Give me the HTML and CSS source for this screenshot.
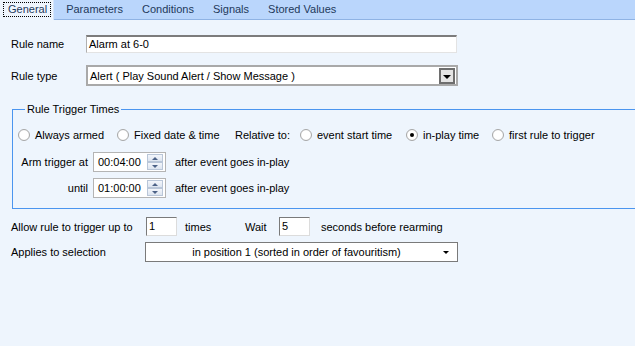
FILE: index.html
```html
<!DOCTYPE html>
<html lang="en">
<head>
  <meta charset="UTF-8">
  <title>Rule Editor</title>
  <link rel="stylesheet" href="styles.css">
</head>
<body>
  <div class="tabs">
    <div class="tab active"><span class="focus">General</span></div>
    <div class="tab">Parameters</div>
    <div class="tab">Conditions</div>
    <div class="tab">Signals</div>
    <div class="tab">Stored Values</div>
  </div>

  <div class="page">
    <div class="row row-name">
      <label class="lbl">Rule name</label>
      <div class="textbox name-box">Alarm at 6-0</div>
    </div>

    <div class="row row-type">
      <label class="lbl">Rule type</label>
      <div class="combo type-combo">
        <span>Alert ( Play Sound Alert / Show Message )</span>
        <span class="drop-btn"><span class="tri"></span></span>
      </div>
    </div>

    <fieldset class="group">
      <legend>Rule Trigger Times</legend>
      <div class="radios">
        <div class="opt w1"><span class="radio"></span>Always armed</div>
        <div class="opt w2"><span class="radio"></span>Fixed date &amp; time</div>
        <div class="opt w3">Relative to:</div>
        <div class="opt w4"><span class="radio"></span>event start time</div>
        <div class="opt w5"><span class="radio checked"></span>in-play time</div>
        <div class="opt"><span class="radio"></span>first rule to trigger</div>
      </div>

      <div class="time-row">
        <span class="time-lbl">Arm trigger at</span>
        <div class="spin">
          <span class="spin-val">00:04:00</span>
          <span class="spin-btns"><span class="up"></span><span class="down"></span></span>
        </div>
        <span class="after">after event goes in-play</span>
      </div>
      <div class="time-row until">
        <span class="time-lbl">until</span>
        <div class="spin">
          <span class="spin-val">01:00:00</span>
          <span class="spin-btns"><span class="up"></span><span class="down"></span></span>
        </div>
        <span class="after">after event goes in-play</span>
      </div>
    </fieldset>

    <div class="row row-allow">
      <span class="lbl wide">Allow rule to trigger up to</span>
      <div class="small-box">1</div>
      <span class="times">times</span>
      <span class="wait">Wait</span>
      <div class="small-box">5</div>
      <span class="secs">seconds before rearming</span>
    </div>

    <div class="row row-applies">
      <span class="lbl wide2">Applies to selection</span>
      <div class="combo flat-combo">
        <span class="center-txt">in position 1 (sorted in order of favouritism)</span>
        <span class="small-tri"></span>
      </div>
    </div>
  </div>
</body>
</html>
```

FILE: styles.css
```css
body {
  margin: 0;
  width: 635px;
  height: 346px;
  overflow: hidden;
  background-color: #eef5fd;
  font-family: "Liberation Sans", Arial, sans-serif;
  font-size: 11px;
  color: #000;
}

/* tab strip */
.tabs {
  display: flex;
  height: 19px;
  background-color: #bad6fc;
  border-bottom: 1px solid #8fb3e4;
}

.tab {
  padding: 0 9px 0 10px;
  line-height: 19px;
  color: #1e395b;
}

.tab.active {
  background-color: #eef5fd;
  padding: 0 2px 0 3px;
  margin-bottom: -1px;
  height: 20px;
  margin-right: 2px;
  border-right: 1px solid #d4e4fa;
}

.tab .focus {
  display: inline-block;
  margin-top: 2px;
  padding: 0 3px 0 4px;
  line-height: 13px;
  border: 1px dotted #000;
}

/* form */
.page {
  padding: 15px 0 0 11px;
}

.row {
  display: flex;
  align-items: center;
}

.lbl {
  width: 75px;
}

.row-name {
  height: 18px;
}

.textbox {
  box-sizing: border-box;
  height: 18px;
  background: #fff;
  border-top: 2px solid #7c7c7c;
  border-left: 1px solid #b0b0b0;
  border-right: 1px solid #e3e3e3;
  border-bottom: 1px solid #e3e3e3;
  padding-left: 2px;
  line-height: 14px;
}

.name-box {
  width: 371px;
}

.row-type {
  margin-top: 12px;
  height: 21px;
}

.combo {
  box-sizing: border-box;
  display: flex;
  align-items: center;
  background: #fff;
}

.type-combo {
  width: 372px;
  height: 21px;
  border: 2px solid #a9a9a9;
  padding-left: 2px;
  justify-content: space-between;
}

.drop-btn {
  box-sizing: border-box;
  width: 16px;
  height: 16px;
  margin-right: 1px;
  border: 2px solid #6e6e6e;
  background: #e4e4e4;
  display: flex;
  align-items: center;
  justify-content: center;
}

.tri {
  width: 0;
  height: 0;
  border-left: 4px solid transparent;
  border-right: 4px solid transparent;
  border-top: 4px solid #000;
  margin-top: 2px;
}

/* group box */
.group {
  margin: 17px -20px 0 1px;
  padding: 12px 0 10px 5px;
  border: 1px solid #4b95ef;
}

.group legend {
  padding: 0 2px 0 2px;
  margin-left: 7px;
  line-height: 13px;
}

.radios {
  display: flex;
  align-items: center;
  height: 14px;
}

.opt {
  display: flex;
  align-items: center;
  white-space: nowrap;
}

.w1 { width: 99px; }
.w2 { width: 118px; }
.w3 { width: 65px; }
.w4 { width: 106px; }
.w5 { width: 86px; }

.radio {
  box-sizing: border-box;
  width: 12px;
  height: 12px;
  margin-right: 5px;
  border-radius: 50%;
  border: 1px solid #a7a7a7;
  background: radial-gradient(circle, #ffffff 55%, #e6e6e6 100%);
  position: relative;
}

.radio.checked::after {
  content: "";
  position: absolute;
  left: 3px;
  top: 3px;
  width: 4px;
  height: 4px;
  border-radius: 50%;
  background: #000;
}

.time-row {
  display: flex;
  align-items: center;
  margin-top: 10px;
  height: 20px;
}

.time-row.until {
  margin-top: 6px;
}

.time-lbl {
  width: 70px;
  padding-right: 5px;
  text-align: right;
}

.spin {
  box-sizing: border-box;
  width: 73px;
  height: 20px;
  background: #fff;
  border: 1px solid #b4b4b4;
  display: flex;
  align-items: center;
  justify-content: space-between;
  padding-left: 4px;
}

.spin-btns {
  display: flex;
  flex-direction: column;
  width: 16px;
  height: 16px;
  margin-right: 2px;
}

.spin-btns span {
  box-sizing: border-box;
  flex: 1;
  border: 1px solid #b9c6d8;
  background: linear-gradient(#f3f6fb, #dde5f0);
  display: flex;
  align-items: center;
  justify-content: center;
}

.spin-btns .up::after {
  content: "";
  border-left: 3px solid transparent;
  border-right: 3px solid transparent;
  border-bottom: 3px solid #4c6287;
}

.spin-btns .down::after {
  content: "";
  border-left: 3px solid transparent;
  border-right: 3px solid transparent;
  border-top: 3px solid #4c6287;
}

.after {
  margin-left: 9px;
}

/* bottom rows */
.row-allow {
  margin-top: 8px;
  height: 19px;
}

.wide {
  width: 135px;
}

.small-box {
  box-sizing: border-box;
  width: 31px;
  height: 19px;
  background: #fff;
  border-top: 1px solid #7a7a7a;
  border-left: 1px solid #7a7a7a;
  border-right: 1px solid #dcdcdc;
  border-bottom: 1px solid #dcdcdc;
  padding-left: 2px;
  line-height: 17px;
}

.times {
  width: 60px;
  margin-left: 8px;
}

.wait {
  width: 34px;
}

.secs {
  margin-left: 11px;
}

.row-applies {
  margin-top: 6px;
  height: 20px;
}

.wide2 {
  width: 134px;
}

.flat-combo {
  width: 313px;
  height: 20px;
  border: 1px solid #7a7a7a;
  position: relative;
  justify-content: center;
}

.center-txt {
  margin-left: -10px;
}

.small-tri {
  position: absolute;
  right: 8px;
  top: 8px;
  width: 0;
  height: 0;
  border-left: 3px solid transparent;
  border-right: 3px solid transparent;
  border-top: 3px solid #000;
}
```
